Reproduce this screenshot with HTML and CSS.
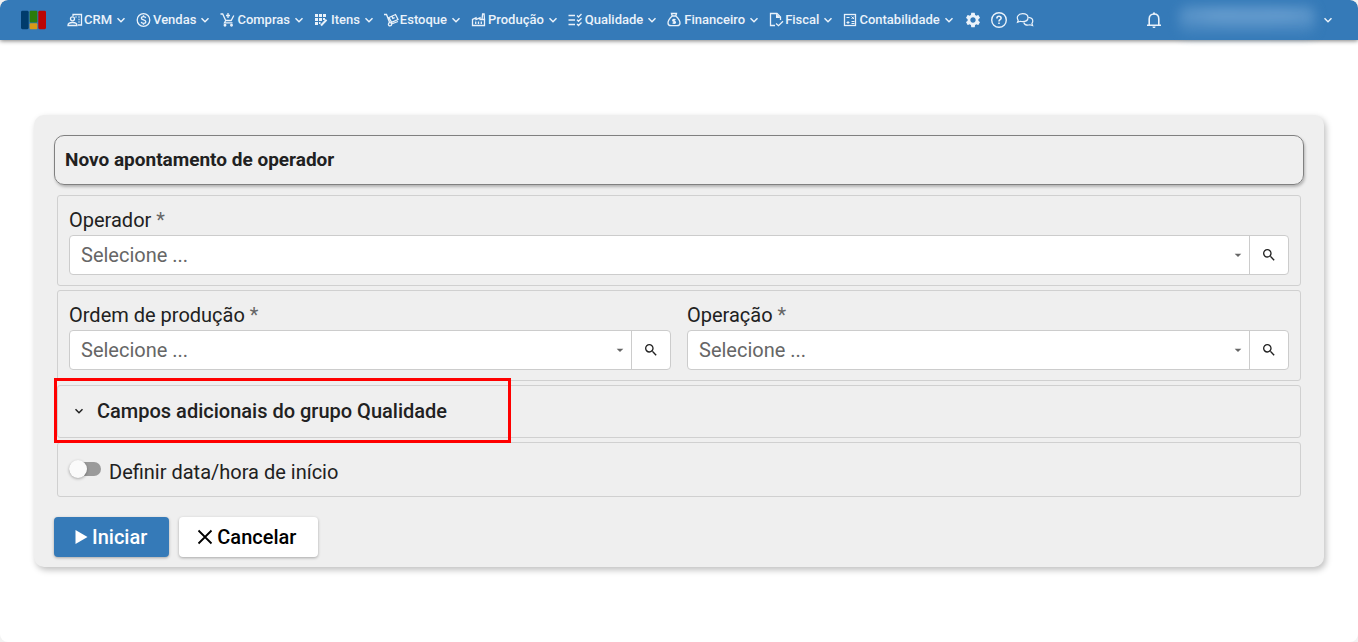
FILE: index.html
```html
<!DOCTYPE html>
<html lang="pt-BR">
<head>
    <meta charset="UTF-8">
    <meta name="viewport" content="width=device-width, initial-scale=1.0">
    <title>Novo apontamento de operador</title>
    <link rel="stylesheet" href="styles.css">
</head>
<body>
    <!-- shared icons -->
    <svg class="sprite" aria-hidden="true">
        <symbol id="chevron" viewBox="0 0 10 10"><path d="M1.5 3.2 5 6.7l3.5-3.5" fill="none" stroke="currentColor" stroke-width="1.5"/></symbol>
        <symbol id="caret" viewBox="0 0 24 24"><path d="M7 10l5 5 5-5z" fill="currentColor"/></symbol>
        <symbol id="search" viewBox="0 0 24 24"><path fill="currentColor" d="M15.5 14h-.79l-.28-.27A6.47 6.47 0 0 0 16 9.5 6.5 6.5 0 1 0 9.5 16c1.61 0 3.09-.59 4.23-1.57l.27.28v.79l5 4.99L20.49 19l-4.99-5zm-6 0C7.01 14 5 11.99 5 9.5S7.01 5 9.5 5 14 7.01 14 9.5 11.99 14 9.5 14z"/></symbol>
    </svg>

    <header class="navbar">
        <a class="logo" href="#" aria-label="Início">
            <svg width="25" height="20" viewBox="0 0 26 20">
                <rect x="0" y="0.5" width="8" height="19" rx="1.5" fill="#003c6c"/>
                <rect x="9" y="0.5" width="8" height="12" rx="1" fill="#2b7d0b"/>
                <rect x="9" y="13.5" width="8" height="6" rx="1" fill="#d99a16"/>
                <rect x="18" y="0.5" width="8" height="19" rx="1.5" fill="#bb0505"/>
            </svg>
        </a>

        <nav class="menu">
            <button type="button" class="menu-item">
                <svg class="menu-icon" viewBox="0 0 16 16"><path d="M6 4V2.5h8.500V13H11M8.500 5h1M11.500 5h1M11.500 7.500h1M11.500 10h1"/><circle cx="5.500" cy="6.800" r="2"/><path d="M1 13.500c0-2.500 2-3 4.500-3s4.500.5 4.500 3z"/></svg>
                <span>CRM</span>
                <svg class="chevron"><use href="#chevron"/></svg>
            </button>
            <button type="button" class="menu-item">
                <svg class="menu-icon" viewBox="0 0 16 16"><circle cx="7.5" cy="8" r="6.3"/><path d="M9.7 6c-.2-1-1.100-1.400-2.200-1.400-1.200 0-2.100.6-2.100 1.600 0 2.400 4.400 1.100 4.400 3.600 0 1-.9 1.600-2.200 1.600S5.400 10.800 5.200 9.800M7.500 3.300v1.300M7.500 11.400v1.300"/></svg>
                <span>Vendas</span>
                <svg class="chevron"><use href="#chevron"/></svg>
            </button>
            <button type="button" class="menu-item">
                <svg class="menu-icon" viewBox="0 0 16 16"><path d="M.5 2h2.200l3 6.500h5.500l2.600-5M5.700 8.500l-1.200 2.300h8M8 1v5M6 3.500h4"/><circle cx="5" cy="13.300" r=".8"/><circle cx="11.500" cy="13.300" r=".8"/></svg>
                <span>Compras</span>
                <svg class="chevron"><use href="#chevron"/></svg>
            </button>
            <button type="button" class="menu-item">
                <svg class="menu-icon" viewBox="0 0 16 16"><path class="solid" d="M1 2h3v3H1zM5 2h3v3H5zM9 2h3v3H9zM1 6h3v3H1zM5 6h3v3H5zM9 6h2v2H9zM1 10h3v3H1zM5 10h1.500v2H5z"/><path stroke-width="2" d="M7 13.500 12.500 7.800"/></svg>
                <span>Itens</span>
                <svg class="chevron"><use href="#chevron"/></svg>
            </button>
            <button type="button" class="menu-item">
                <svg class="menu-icon icon-flush" viewBox="0 0 16 16"><path d="M0 2.500h2.500l3.200 8.200M7.500 12l6.500-2.500M5 5.500l6.500-3 2.500 5-6.500 2.800zM8 4.500l.8 2 1.800-.8"/><circle cx="6" cy="12.300" r="1.600"/></svg>
                <span>Estoque</span>
                <svg class="chevron"><use href="#chevron"/></svg>
            </button>
            <button type="button" class="menu-item">
                <svg class="menu-icon" viewBox="0 0 16 16"><path d="M1.500 13.500v-6L5 5.800v1.700l4-1.700v1.700h4.500v6zM11 7.500l.6-5.500h1.500l.4 5.500M4.700 9.500V12M7.500 9.500V12M10.300 9.500V12"/></svg>
                <span>Produção</span>
                <svg class="chevron"><use href="#chevron"/></svg>
            </button>
            <button type="button" class="menu-item">
                <svg class="menu-icon" viewBox="0 0 16 16"><path d="M.5 3.500h6.500M.5 8h6.500M.5 12.500h6.500M9 3.500l1.500 1.500L13.500 2M9 7.800l1.500 1.500 3-3M9 12l1.500 1.500 3-3"/></svg>
                <span>Qualidade</span>
                <svg class="chevron"><use href="#chevron"/></svg>
            </button>
            <button type="button" class="menu-item">
                <svg class="menu-icon" viewBox="0 0 16 16"><path d="M5.200 4 4.500 1.500h5L8.800 4zM5.200 4C2.800 6.200 1 8.800 1 11c0 2 1 2.700 3 2.700h6c2 0 3-.7 3-2.700 0-2.200-1.800-4.800-4.200-7M8.500 8c-1-.9-2.800-.6-2.800.5 0 1.300 2.800.6 2.800 1.900 0 1-1.900 1.200-2.900.3M7 6.800v5.200"/></svg>
                <span>Financeiro</span>
                <svg class="chevron"><use href="#chevron"/></svg>
            </button>
            <button type="button" class="menu-item">
                <svg class="menu-icon icon-flush" viewBox="0 0 16 16"><path d="M6 13.500H1.500v-12H8l3.500 3.500v3M7 11.500l2.500 2.200 4.500-4.500"/><path class="solid" d="M7 1.500V6h4.500z"/></svg>
                <span>Fiscal</span>
                <svg class="chevron"><use href="#chevron"/></svg>
            </button>
            <button type="button" class="menu-item">
                <svg class="menu-icon icon-flush" viewBox="0 0 16 16"><rect x="1.5" y="2.5" width="11" height="11"/><path stroke-width="1" d="M3.500 5.500h3M8.500 4.500l2.500 2.500M11 4.500 8.500 7M3.500 10.500h3M5 9v3M8.500 9.500h3M8.500 11.500h3"/></svg>
                <span>Contabilidade</span>
                <svg class="chevron"><use href="#chevron"/></svg>
            </button>
            <button type="button" class="menu-button" aria-label="Configurações">
                <svg width="18" height="18" viewBox="0 0 24 24"><path fill="currentColor" d="M19.14 12.94c.04-.3.06-.61.06-.94 0-.32-.02-.64-.07-.94l2.03-1.58a.49.49 0 0 0 .12-.61l-1.92-3.32a.488.488 0 0 0-.59-.22l-2.39.96c-.5-.38-1.03-.7-1.62-.94l-.36-2.54a.484.484 0 0 0-.48-.41h-3.84c-.24 0-.43.17-.47.41l-.36 2.54c-.59.24-1.13.57-1.62.94l-2.39-.96c-.22-.08-.47 0-.59.22L2.74 8.87c-.12.21-.08.47.12.61l2.03 1.58c-.05.3-.09.63-.09.94s.02.64.07.94l-2.03 1.58a.49.49 0 0 0-.12.61l1.92 3.32c.12.22.37.29.59.22l2.39-.96c.5.38 1.03.7 1.62.94l.36 2.54c.05.24.24.41.48.41h3.84c.24 0 .44-.17.47-.41l.36-2.54c.59-.24 1.13-.56 1.62-.94l2.39.96c.22.08.47 0 .59-.22l1.92-3.32c.12-.22.07-.47-.12-.61l-2.01-1.58zM12 15.6c-1.98 0-3.6-1.62-3.6-3.6s1.62-3.6 3.6-3.6 3.6 1.62 3.6 3.6-1.62 3.6-3.6 3.6z"/></svg>
            </button>
            <button type="button" class="menu-button" aria-label="Ajuda">
                <svg width="18" height="18" viewBox="0 0 18 18" fill="none" stroke="currentColor" stroke-width="1.4"><circle cx="9" cy="9" r="7.3"/><path stroke-width="1.6" d="M6.900 7.400c0-1.300.9-2.100 2.100-2.100s2.100.8 2.100 1.900c0 1.500-2.100 1.600-2.100 3.200M9 11.500v1.500"/></svg>
            </button>
            <button type="button" class="menu-button" aria-label="Mensagens">
                <svg width="18" height="18" viewBox="0 0 18 18" fill="none" stroke="currentColor" stroke-width="1.2"><path d="M2.200 9.400C.2 6.500 1.800 2.700 6.500 2.700c3.600 0 5.500 2 5.500 4s-1.900 4-5.500 4c-.8 0-1.500-.1-2.100-.4L1.500 11.300z"/><path d="M12.300 6.300c3 .2 4.500 1.800 4.500 3.700 0 1-.3 1.800-.9 2.400l.7 2.200-2.600-.8c-2.500.8-5.200.1-6.300-2.400"/></svg>
            </button>
        </nav>

        <div class="account">
            <button type="button" class="menu-button" aria-label="Notificações">
                <svg width="18" height="20" viewBox="0 0 18 20" fill="none" stroke="currentColor" stroke-width="1.6"><path d="M2 15.300h14M4.200 15V9c0-3 1.900-5 4.800-5s4.800 2 4.800 5v6"/><path class="solid" d="M8 2.500h2v2H8zM7.500 16.500h3c0 1-.6 1.500-1.500 1.500s-1.500-.5-1.500-1.500z"/></svg>
            </button>
            <button type="button" class="user" aria-label="Usuário">
                <span class="user-name"></span>
                <svg class="chevron"><use href="#chevron"/></svg>
            </button>
        </div>
    </header>

    <main>
        <form class="card">
            <h1 class="card-title">Novo apontamento de operador</h1>

            <div class="panels">
                <div class="panel">
                    <div class="field">
                        <label for="operador">Operador <span class="required">*</span></label>
                        <div class="select-group">
                            <div class="select-box">
                                <select id="operador"><option>Selecione ...</option></select>
                                <svg class="caret"><use href="#caret"/></svg>
                            </div>
                            <button type="button" class="search-button" aria-label="Pesquisar operador"><svg><use href="#search"/></svg></button>
                        </div>
                    </div>
                </div>

                <div class="panel">
                    <div class="field">
                        <label for="ordem">Ordem de produção <span class="required">*</span></label>
                        <div class="select-group">
                            <div class="select-box">
                                <select id="ordem"><option>Selecione ...</option></select>
                                <svg class="caret"><use href="#caret"/></svg>
                            </div>
                            <button type="button" class="search-button" aria-label="Pesquisar ordem de produção"><svg><use href="#search"/></svg></button>
                        </div>
                    </div>
                    <div class="field">
                        <label for="operacao">Operação <span class="required">*</span></label>
                        <div class="select-group">
                            <div class="select-box">
                                <select id="operacao"><option>Selecione ...</option></select>
                                <svg class="caret"><use href="#caret"/></svg>
                            </div>
                            <button type="button" class="search-button" aria-label="Pesquisar operação"><svg><use href="#search"/></svg></button>
                        </div>
                    </div>
                </div>

                <div class="panel panel-group">
                    <button type="button" class="group-toggle" aria-expanded="false">
                        <svg class="chevron"><use href="#chevron"/></svg>
                        <span>Campos adicionais do grupo Qualidade</span>
                    </button>
                    <div class="highlight"></div>
                </div>

                <div class="panel panel-switch">
                    <input type="checkbox" class="switch" id="definir-inicio">
                    <label for="definir-inicio">Definir data/hora de início</label>
                </div>
            </div>

            <div class="actions">
                <button type="submit" class="btn btn-primary">
                    <svg width="16" height="16" viewBox="0 0 16 16"><path d="M3.500 1v14l12-7z" fill="currentColor"/></svg>
                    <span>Iniciar</span>
                </button>
                <button type="button" class="btn">
                    <svg width="16" height="16" viewBox="0 0 16 16"><path d="M1.500 1.500l13 13M14.500 1.500l-13 13" fill="none" stroke="currentColor" stroke-width="1.8"/></svg>
                    <span>Cancelar</span>
                </button>
            </div>
        </form>
    </main>
</body>
</html>
```
FILE: styles.css
```css
* {
    box-sizing: border-box;
}

html {
    background-color: #f2f2f2;
}

body {
    margin: 0;
    min-height: 100vh;
    background-color: #fff;
    border-radius: 8px;
    font-family: Roboto, "Liberation Sans", sans-serif;
    font-size: 20px;
    line-height: 24px;
    color: #212121;
}

button,
select {
    font: inherit;
    color: inherit;
    background: none;
    border: none;
    padding: 0;
    margin: 0;
    cursor: pointer;
}

svg {
    display: block;
    flex-shrink: 0;
}

.sprite {
    position: absolute;
    width: 0;
    height: 0;
}

.solid {
    fill: currentColor;
    stroke: none;
}

.chevron {
    width: 10px;
    height: 10px;
}

/* top bar */
.navbar {
    display: flex;
    align-items: center;
    height: 40px;
    padding: 0 25px 0 21px;
    background-color: #357ab8;
    color: #eaf2fa;
    border-radius: 8px 8px 0 0;
    box-shadow: 0 1px 4px rgba(0, 0, 0, 0.5);
}

.menu {
    display: flex;
    align-items: center;
    gap: 10px;
    margin-left: 21px;
}

.menu-item {
    display: flex;
    align-items: center;
    font-size: 13px;
    font-weight: 500;
    line-height: 16px;
    white-space: nowrap;
}

.menu-item .chevron {
    margin-left: 4px;
}

.menu-icon {
    width: 16px;
    height: 16px;
    margin-right: 1px;
    fill: none;
    stroke: currentColor;
    stroke-width: 1.3;
}

.icon-flush {
    margin-right: 0;
}

.menu-button {
    margin-right: -2px;
}

.account {
    display: flex;
    align-items: center;
    gap: 18px;
    margin-left: auto;
}

.user {
    display: flex;
    align-items: center;
    gap: 8px;
}

.user-name {
    width: 136px;
    height: 28px;
    border-radius: 8px;
    background:
        radial-gradient(ellipse at 30% 30%, #76a8d6, transparent 60%),
        radial-gradient(ellipse at 75% 30%, #76a8d6, transparent 60%),
        #4585bf;
    opacity: 0.8;
    filter: blur(6px);
}

/* form */
main {
    padding: 75px 34px;
}

.card {
    padding: 20px 20px 10px;
    background-color: #efefef;
    border-radius: 10px;
    box-shadow: 2px 3px 6px rgba(0, 0, 0, 0.25);
}

.card-title {
    margin: 0;
    padding: 12px 10px;
    border: 1px solid #808080;
    border-radius: 10px;
    box-shadow: 1px 2px 3px rgba(0, 0, 0, 0.25);
    font-size: 19px;
    font-weight: 700;
    line-height: 24px;
}

.panels {
    display: flex;
    flex-direction: column;
    gap: 4px;
    margin: 10px 3px 20px;
}

.panel {
    display: flex;
    gap: 16px;
    padding: 12px 11px 10px;
    border: 1px solid #d0d0d0;
    border-radius: 3px;
}

.field {
    flex: 1;
    min-width: 0;
}

.field label {
    display: block;
    margin-bottom: 3px;
}

.required {
    color: #666;
}

.select-group {
    display: flex;
    height: 40px;
    background-color: #fff;
    border: 1px solid #ccc;
    border-radius: 4px;
}

.select-box {
    flex: 1;
    display: grid;
    align-items: center;
}

.select-box select {
    grid-area: 1 / 1;
    width: 100%;
    height: 100%;
    padding: 0 32px 0 11px;
    appearance: none;
    color: #666;
}

.caret {
    grid-area: 1 / 1;
    justify-self: end;
    width: 16px;
    height: 16px;
    margin-right: 3px;
    color: #666;
    pointer-events: none;
}

.search-button {
    display: flex;
    align-items: center;
    justify-content: center;
    width: 39px;
    border-left: 1px solid #ccc;
}

.search-button svg {
    width: 16px;
    height: 16px;
}

.panel-group {
    position: relative;
    padding: 13px 16px 14px;
}

.group-toggle {
    display: flex;
    align-items: center;
    gap: 13px;
    font-weight: 500;
}

/* marks the group inside the form */
.highlight {
    position: absolute;
    top: -8px;
    left: -4px;
    width: 457px;
    height: 65px;
    border: 3px solid #f00;
    pointer-events: none;
}

.panel-switch {
    align-items: center;
    gap: 8px;
    padding: 11px 11px 12px;
}

.panel-switch label {
    padding-top: 6px;
}

.switch {
    appearance: none;
    display: flex;
    align-items: center;
    width: 32px;
    height: 14px;
    margin: 0;
    border-radius: 7px;
    background-color: #9a9a9a;
    cursor: pointer;
}

.switch::before {
    content: "";
    width: 18px;
    height: 18px;
    border-radius: 50%;
    background-color: #fafafa;
    box-shadow: 0 1px 3px rgba(0, 0, 0, 0.3);
}

.switch:checked {
    justify-content: flex-end;
    background-color: #357ab8;
}

.actions {
    display: flex;
    gap: 10px;
}

.btn {
    display: flex;
    align-items: center;
    gap: 4px;
    height: 40px;
    padding: 0 22px 0 18px;
    border-radius: 4px;
    background-color: #fff;
    box-shadow: 0 1px 3px rgba(0, 0, 0, 0.3);
    color: #000;
    font-weight: 500;
}

.btn-primary {
    background-color: #357ab8;
    color: #fff;
}
```
